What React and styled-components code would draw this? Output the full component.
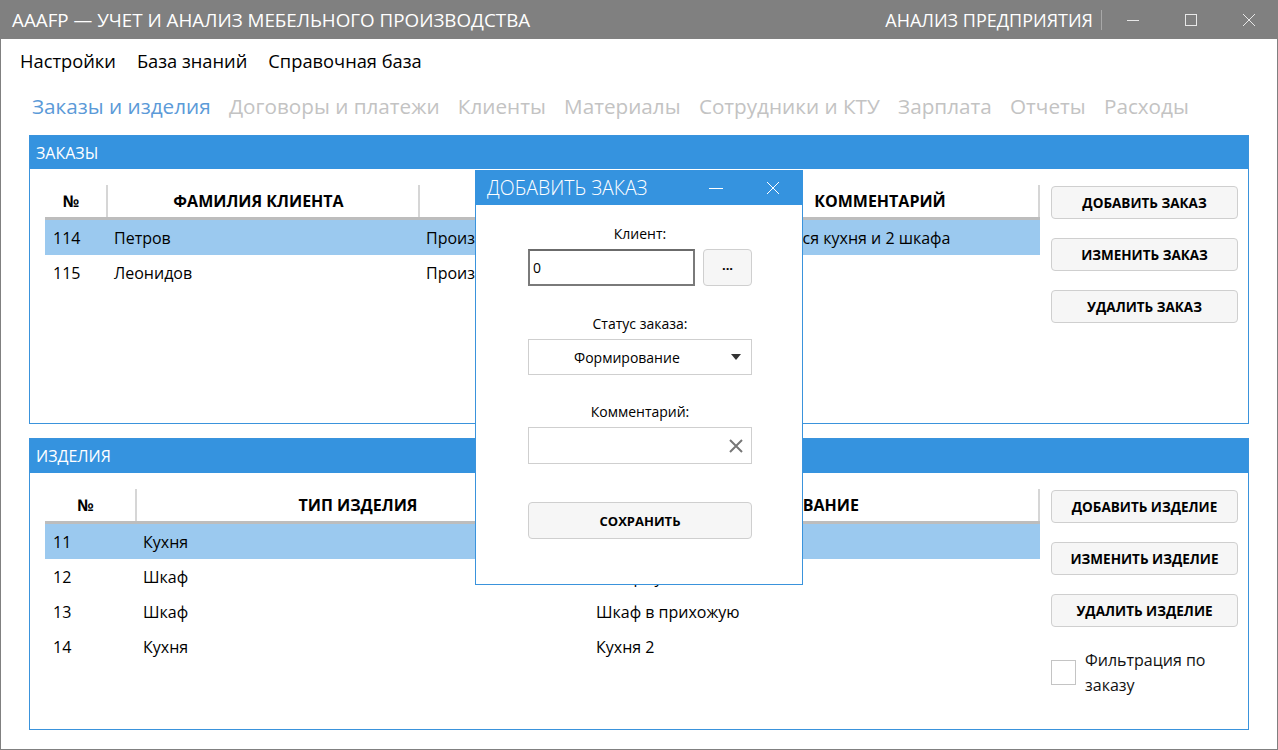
import React from 'react';
import styled, { createGlobalStyle } from 'styled-components';

const GlobalStyle = createGlobalStyle`
    * { box-sizing: border-box; }
    body {
        margin: 0;
        background: #fff;
        font-family: 'Open Sans', 'Noto Sans', sans-serif;
        color: #000;
    }
`;

const orders = [
    { id: 114, name: 'Петров', status: 'Производство', comment: 'Собирается кухня и 2 шкафа', active: true },
    { id: 115, name: 'Леонидов', status: 'Производство', comment: '' },
];

const products = [
    { id: 11, type: 'Кухня', title: 'Кухня 1', active: true },
    { id: 12, type: 'Шкаф', title: 'Шкаф-купе' },
    { id: 13, type: 'Шкаф', title: 'Шкаф в прихожую' },
    { id: 14, type: 'Кухня', title: 'Кухня 2' },
];

const tabs = ['Заказы и изделия', 'Договоры и платежи', 'Клиенты', 'Материалы', 'Сотрудники и КТУ', 'Зарплата', 'Отчеты', 'Расходы'];

export default function App() {
    return (
        <>
            <GlobalStyle />
            <Window>
                <TitleBar>
                    <AppTitle>АААFP — УЧЕТ И АНАЛИЗ МЕБЕЛЬНОГО ПРОИЗВОДСТВА</AppTitle>
                    <TitleRight>
                        <ModeName>АНАЛИЗ ПРЕДПРИЯТИЯ</ModeName>
                        <Divider />
                        <WinButton>
                            <svg width="14" height="14" viewBox="0 0 14 14">
                                <line x1="1" y1="7.5" x2="13" y2="7.5" stroke="#e8e8e8" strokeWidth="1" />
                            </svg>
                        </WinButton>
                        <WinButton>
                            <svg width="14" height="14" viewBox="0 0 14 14">
                                <rect x="1.5" y="1.5" width="11" height="11" fill="none" stroke="#e8e8e8" strokeWidth="1" />
                            </svg>
                        </WinButton>
                        <WinButton>
                            <svg width="14" height="14" viewBox="0 0 14 14">
                                <path d="M1 1 L13 13 M13 1 L1 13" stroke="#e8e8e8" strokeWidth="1" />
                            </svg>
                        </WinButton>
                    </TitleRight>
                </TitleBar>

                <MenuBar>
                    <MenuItem>Настройки</MenuItem>
                    <MenuItem>База знаний</MenuItem>
                    <MenuItem>Справочная база</MenuItem>
                </MenuBar>

                <TabBar>
                    {tabs.map((t, i) => (
                        <Tab key={t} $active={i === 0}>{t}</Tab>
                    ))}
                </TabBar>

                <Content>
                    <GroupBox $height={289}>
                        <GroupHeader>ЗАКАЗЫ</GroupHeader>
                        <GroupBody>
                            <Table>
                                <HeadRow>
                                    <HeadCell $w={61}>№</HeadCell>
                                    <HeadCell $w={312} $sep>ФАМИЛИЯ КЛИЕНТА</HeadCell>
                                    <HeadCell $w={302} $sep />
                                    <HeadCell $w={320} $sep $end>КОММЕНТАРИЙ</HeadCell>
                                </HeadRow>
                                {orders.map((o) => (
                                    <Row key={o.id} $active={o.active}>
                                        <Cell $w={61}>{o.id}</Cell>
                                        <Cell $w={312}>{o.name}</Cell>
                                        <Cell $w={302}>{o.status}</Cell>
                                        <Cell $w={320}>{o.comment}</Cell>
                                    </Row>
                                ))}
                            </Table>
                            <SideColumn>
                                <ActionButton>ДОБАВИТЬ ЗАКАЗ</ActionButton>
                                <ActionButton>ИЗМЕНИТЬ ЗАКАЗ</ActionButton>
                                <ActionButton>УДАЛИТЬ ЗАКАЗ</ActionButton>
                            </SideColumn>
                        </GroupBody>
                    </GroupBox>

                    <GroupBox $height={292}>
                        <GroupHeader $tall>ИЗДЕЛИЯ</GroupHeader>
                        <GroupBody>
                            <Table>
                                <HeadRow>
                                    <HeadCell $w={90}>№</HeadCell>
                                    <HeadCell $w={453} $sep>ТИП ИЗДЕЛИЯ</HeadCell>
                                    <HeadCell $w={452} $sep $end>НАЗВАНИЕ</HeadCell>
                                </HeadRow>
                                {products.map((p) => (
                                    <Row key={p.id} $active={p.active}>
                                        <Cell $w={90}>{p.id}</Cell>
                                        <Cell $w={453}>{p.type}</Cell>
                                        <Cell $w={452}>{p.title}</Cell>
                                    </Row>
                                ))}
                            </Table>
                            <SideColumn>
                                <ActionButton>ДОБАВИТЬ ИЗДЕЛИЕ</ActionButton>
                                <ActionButton>ИЗМЕНИТЬ ИЗДЕЛИЕ</ActionButton>
                                <ActionButton>УДАЛИТЬ ИЗДЕЛИЕ</ActionButton>
                                <CheckRow>
                                    <CheckBox />
                                    <CheckLabel>Фильтрация по заказу</CheckLabel>
                                </CheckRow>
                            </SideColumn>
                        </GroupBody>
                    </GroupBox>
                </Content>

                <Dialog>
                    <DialogHeader>
                        <DialogTitle>ДОБАВИТЬ ЗАКАЗ</DialogTitle>
                        <DialogControls>
                            <svg width="16" height="16" viewBox="0 0 16 16">
                                <line x1="1" y1="8.5" x2="15" y2="8.5" stroke="#fff" strokeWidth="1" />
                            </svg>
                            <svg width="16" height="16" viewBox="0 0 16 16">
                                <path d="M2 2 L14 14 M14 2 L2 14" stroke="#fff" strokeWidth="1" />
                            </svg>
                        </DialogControls>
                    </DialogHeader>
                    <DialogBody>
                        <FieldLabel>Клиент:</FieldLabel>
                        <FieldRow>
                            <TextInput defaultValue="0" />
                            <DotsButton>...</DotsButton>
                        </FieldRow>
                        <FieldLabel $gap={28}>Статус заказа:</FieldLabel>
                        <Select>
                            <span>Формирование</span>
                            <svg width="10" height="6" viewBox="0 0 10 6">
                                <path d="M0 0 L10 0 L5 6 Z" fill="#333" />
                            </svg>
                        </Select>
                        <FieldLabel $gap={27}>Комментарий:</FieldLabel>
                        <CommentInput>
                            <svg width="16" height="16" viewBox="0 0 16 16">
                                <path d="M2 2 L14 14 M14 2 L2 14" stroke="#777" strokeWidth="2" />
                            </svg>
                        </CommentInput>
                        <SaveButton>СОХРАНИТЬ</SaveButton>
                    </DialogBody>
                </Dialog>
            </Window>
        </>
    );
}

const Window = styled.div`
    position: relative;
    width: 1278px;
    height: 750px;
    border: 1px solid #808080;
    border-top: none;
    background: #fff;
    overflow: hidden;
`;

const TitleBar = styled.div`
    height: 39px;
    margin: 0 -1px;
    background: #808080;
    display: flex;
    align-items: center;
    justify-content: space-between;
    padding-left: 12px;
    color: #fff;
`;

const AppTitle = styled.div`
    font-size: 18.8px;
`;

const TitleRight = styled.div`
    display: flex;
    align-items: center;
    height: 100%;
`;

const ModeName = styled.div`
    font-size: 18px;
    margin-right: 8px;
`;

const Divider = styled.div`
    width: 1px;
    height: 20px;
    background: #a8a8a8;
    margin-right: 2px;
`;

const WinButton = styled.div`
    width: 58px;
    height: 100%;
    display: flex;
    align-items: center;
    justify-content: center;
`;

const MenuBar = styled.div`
    height: 42px;
    display: flex;
    align-items: center;
    padding-left: 19px;
    gap: 21px;
`;

const MenuItem = styled.div`
    font-size: 18.3px;
`;

const TabBar = styled.div`
    height: 54px;
    display: flex;
    align-items: center;
    padding: 0 0 5px 31px;
    gap: 18.3px;
`;

const Tab = styled.div`
    font-size: 20.7px;
    color: ${(p) => (p.$active ? '#5b9ad8' : '#c3c3c3')};
`;

const Content = styled.div`
    padding: 0 28px;
    display: flex;
    flex-direction: column;
    gap: 14px;
`;

const GroupBox = styled.div`
    height: ${(p) => p.$height}px;
    border: 1px solid #3a93dc;
    display: flex;
    flex-direction: column;
`;

const GroupHeader = styled.div`
    height: ${(p) => (p.$tall ? 34 : 33)}px;
    background: #3593df;
    color: #fff;
    font-size: 16px;
    display: flex;
    align-items: center;
    padding-left: 6px;
`;

const GroupBody = styled.div`
    display: flex;
    align-items: flex-start;
    padding: 16px 0 0 15px;
`;

const Table = styled.div`
    width: 995px;
`;

const HeadRow = styled.div`
    display: flex;
    height: 35px;
    border-bottom: 3px solid #bdbdbd;
`;

const HeadCell = styled.div`
    width: ${(p) => p.$w}px;
    flex: none;
    display: flex;
    align-items: center;
    justify-content: center;
    padding-right: ${(p) => (p.$end ? 0 : 9)}px;
    font-size: 16px;
    font-weight: 700;
    border-left: ${(p) => (p.$sep ? '2px solid #d6d6d6' : 'none')};
    border-right: ${(p) => (p.$end ? '2px solid #d6d6d6' : 'none')};
`;

const Row = styled.div`
    display: flex;
    height: 35px;
    background: ${(p) => (p.$active ? '#9bc9ef' : 'transparent')};
`;

const Cell = styled.div`
    width: ${(p) => p.$w}px;
    flex: none;
    display: flex;
    align-items: center;
    padding-left: 8px;
    font-size: 16px;
    white-space: nowrap;
    overflow: hidden;
`;

const SideColumn = styled.div`
    margin-left: 11px;
    margin-top: 1px;
    width: 187px;
    display: flex;
    flex-direction: column;
    gap: 19px;
`;

const ActionButton = styled.button`
    height: 33px;
    width: 187px;
    background: #f6f6f6;
    border: 1px solid #cfcfcf;
    border-radius: 4px;
    font-family: 'Open Sans', 'Noto Sans', sans-serif;
    font-size: 13.5px;
    font-weight: 700;
    color: #000;
    padding: 0;
`;

const CheckRow = styled.div`
    display: flex;
    align-items: flex-start;
    gap: 9px;
    margin-top: 2px;
`;

const CheckBox = styled.div`
    width: 25px;
    height: 25px;
    border: 1px solid #c4c4c4;
    margin-top: 12px;
    flex: none;
`;

const CheckLabel = styled.div`
    font-size: 16px;
    line-height: 25px;
    width: 140px;
    color: #111;
`;

const Dialog = styled.div`
    position: absolute;
    left: 474px;
    top: 170px;
    width: 328px;
    height: 415px;
    background: #fff;
    border: 1px solid #3a93dc;
    display: flex;
    flex-direction: column;
`;

const DialogHeader = styled.div`
    height: 35px;
    margin: -1px -1px 0;
    background: #3593df;
    display: flex;
    align-items: center;
    justify-content: space-between;
    padding: 0 22px 0 12px;
`;

const DialogTitle = styled.div`
    color: #fff;
    font-size: 19.5px;
    font-weight: 300;
`;

const DialogControls = styled.div`
    display: flex;
    gap: 41px;
    align-items: center;
`;

const DialogBody = styled.div`
    padding: 19px 0 0 52px;
    display: flex;
    flex-direction: column;
    width: 276px;
`;

const FieldLabel = styled.div`
    width: 224px;
    text-align: center;
    font-size: 14px;
    line-height: 20px;
    margin-top: ${(p) => p.$gap || 0}px;
    margin-bottom: 5px;
`;

const FieldRow = styled.div`
    display: flex;
    gap: 8px;
`;

const TextInput = styled.input`
    width: 167px;
    height: 37px;
    border: 2px solid #7a7a7a;
    border-top-color: #6b6b6b;
    font-family: 'Open Sans', 'Noto Sans', sans-serif;
    font-size: 14px;
    padding: 0 3px;
    outline: none;
    color: #000;
`;

const DotsButton = styled.button`
    width: 49px;
    height: 37px;
    background: #f6f6f6;
    border: 1px solid #cfcfcf;
    border-radius: 4px;
    font-family: 'Open Sans', 'Noto Sans', sans-serif;
    font-size: 13px;
    font-weight: 700;
    padding: 0 0 6px;
`;

const Select = styled.div`
    width: 224px;
    height: 36px;
    border: 1px solid #cfcfcf;
    display: flex;
    align-items: center;
    justify-content: space-between;
    padding: 0 10px 0 45px;
    font-size: 14px;
`;

const CommentInput = styled.div`
    width: 224px;
    height: 37px;
    border: 1px solid #cfcfcf;
    display: flex;
    align-items: center;
    justify-content: flex-end;
    padding-right: 7px;
`;

const SaveButton = styled.button`
    margin-top: 38px;
    width: 224px;
    height: 37px;
    background: #f6f6f6;
    border: 1px solid #cfcfcf;
    border-radius: 4px;
    font-family: 'Open Sans', 'Noto Sans', sans-serif;
    font-size: 13px;
    font-weight: 700;
    color: #000;
`;
